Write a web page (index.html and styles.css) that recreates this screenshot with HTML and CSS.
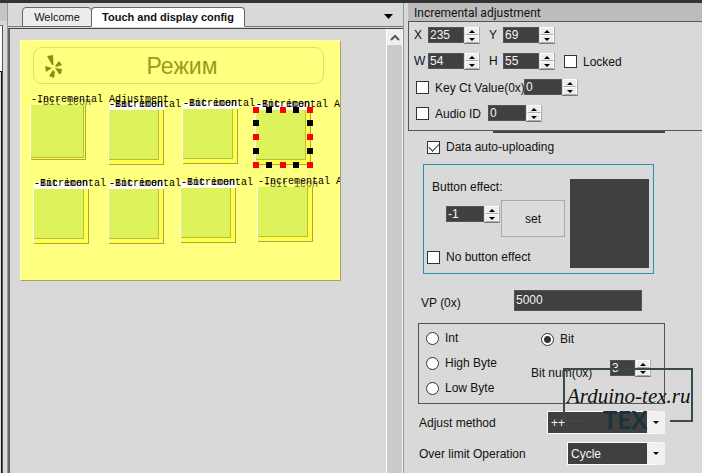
FILE: index.html
```html
<!DOCTYPE html>
<html lang="en">
<head>
<meta charset="utf-8">
<title>Touch and display config</title>
<link rel="stylesheet" href="styles.css">
</head>
<body>
<div class="window">
  <aside class="dock"><div class="dock-page"></div></aside>
  <main class="editor">
    <nav class="tabs">
      <button class="tab" type="button">Welcome</button>
      <button class="tab active" type="button">Touch and display config</button>
      <button class="tab-menu" type="button" aria-label="Open pages"><svg width="9" height="5" viewBox="0 0 9 5"><path d="M0 0h9L4.500 5z"/></svg></button>
    </nav>
    <div class="workspace">
      <div class="stage">
        <div class="screen">
          <div class="title-bar">
            <svg class="logo" width="20" height="25" viewBox="0 0 20 25"><path d="M3 2l6-1 .5 10H8zM11 12l4-5 3 4-6 2zM11 14l7 1-1 5-2 0zM9 16l2 2-1 6-5-2zM1 12l7 2-6 4z"/></svg>
            <span>Режим</span>
          </div>
          <div class="node n1"><i></i><span class="icon-name low">-Bit icon</span><span class="name">-Incremental Adjustment</span></div>
          <div class="node n2"><i></i><span class="icon-name">-Bit icon</span><span class="name short">-Incremental Adjustment</span></div>
          <div class="node n3"><i></i><span class="icon-name">-Bit icon</span><span class="name short">-Incremental Adjustment</span></div>
          <div class="node n4"><i></i><span class="icon-name">-Bit icon</span><span class="name">-Incremental Adjustment</span></div>
          <div class="node n5"><i></i><span class="icon-name">-Bit icon</span><span class="name short">-Incremental Adjustment</span></div>
          <div class="node n6"><i></i><span class="icon-name">-Bit icon</span><span class="name short">-Incremental Adjustment</span></div>
          <div class="node n7"><i></i><span class="icon-name">-Bit icon</span><span class="name short">-Incremental Adjustment</span></div>
          <div class="node n8"><i></i><span class="icon-name low">-Bit icon</span><span class="name">-Incremental Adjustment</span></div>
          <svg class="selection" width="60" height="61" viewBox="0 0 60 61">
            <path fill="#f00" d="M0 0h6v6H0zM27 0h6v6h-6zM54 0h6v6h-6zM0 27h6v6H0zM54 27h6v6h-6zM0 55h6v6H0zM27 55h6v6h-6zM54 55h6v6h-6z"/>
            <path fill="#000" d="M13 0h6v6h-6zM40 0h6v6h-6zM0 13h6v6H0zM54 13h6v6h-6zM0 41h6v6H0zM54 41h6v6h-6zM13 55h6v6h-6zM40 55h6v6h-6z"/>
          </svg>
        </div>
      </div>
      <div class="scroll"><button type="button" aria-label="Scroll up"><svg width="10" height="7" viewBox="0 0 10 7"><path d="M1 6l4-4 4 4" fill="none" stroke="#555" stroke-width="2"/></svg></button></div>
    </div>
  </main>
  <form class="inspector">
    <h2>Incremental adjustment</h2>
    <section class="geometry">
      <div class="row">
        <label class="axis" for="x">X</label>
        <span class="spin"><input id="x" type="text" value="235"><span class="steps"><button type="button" aria-label="Increase X"></button><button type="button" aria-label="Decrease X"></button></span></span>
        <label class="axis second" for="y">Y</label>
        <span class="spin"><input id="y" type="text" value="69"><span class="steps"><button type="button" aria-label="Increase Y"></button><button type="button" aria-label="Decrease Y"></button></span></span>
      </div>
      <div class="row">
        <label class="axis" for="w">W</label>
        <span class="spin"><input id="w" type="text" value="54"><span class="steps"><button type="button" aria-label="Increase W"></button><button type="button" aria-label="Decrease W"></button></span></span>
        <label class="axis second" for="h">H</label>
        <span class="spin"><input id="h" type="text" value="55"><span class="steps"><button type="button" aria-label="Increase H"></button><button type="button" aria-label="Decrease H"></button></span></span>
        <label class="check locked"><input type="checkbox">Locked</label>
      </div>
      <div class="row">
        <label class="check key"><input type="checkbox">Key Ct Value(0x)</label>
        <span class="spin wide"><input aria-label="Key Ct value" type="text" value="0"><span class="steps"><button type="button" aria-label="Increase key value"></button><button type="button" aria-label="Decrease key value"></button></span></span>
      </div>
      <div class="row">
        <label class="check audio"><input type="checkbox">Audio ID</label>
        <span class="spin wide"><input aria-label="Audio ID value" type="text" value="0"><span class="steps"><button type="button" aria-label="Increase audio ID"></button><button type="button" aria-label="Decrease audio ID"></button></span></span>
      </div>
    </section>
    <section class="fields">
      <div class="hidden-edge"></div>
      <label class="check upload"><input type="checkbox" checked>Data auto-uploading</label>
      <div class="effect">
        <div class="effect-form">
          <label class="effect-label" for="effect">Button effect:</label>
          <div class="effect-row">
            <span class="spin wide"><input id="effect" type="text" value="-1"><span class="steps"><button type="button" aria-label="Next effect"></button><button type="button" aria-label="Previous effect"></button></span></span>
            <button class="set" type="button">set</button>
          </div>
          <label class="check"><input type="checkbox">No button effect</label>
        </div>
        <div class="preview"></div>
      </div>
      <div class="vp"><label for="vp">VP (0x)</label><input id="vp" type="text" value="5000"></div>
      <div class="mode">
        <div class="mode-col">
          <label class="radio"><input type="radio" name="mode">Int</label>
          <label class="radio"><input type="radio" name="mode">High Byte</label>
          <label class="radio"><input type="radio" name="mode">Low Byte</label>
        </div>
        <div class="bit-col">
          <label class="radio bit"><input type="radio" name="mode" checked>Bit</label>
          <div class="bit-row"><label for="bit">Bit num(0x)</label>
            <span class="spin narrow"><input id="bit" type="text" value="3"><span class="steps"><button type="button" aria-label="Increase bit"></button><button type="button" aria-label="Decrease bit"></button></span></span>
          </div>
        </div>
      </div>
      <div class="choice"><label for="adjust">Adjust method</label><span class="drop"><select id="adjust"><option>++</option></select></span></div>
      <div class="choice"><label for="limit">Over limit Operation</label><span class="drop small"><select id="limit"><option>Cycle</option></select></span></div>
      <div class="watermark">
        <svg width="130" height="54" viewBox="0 0 130 54"><path d="M22 53H1V1h128v52h-22" fill="none" stroke="#3a4a4c" stroke-width="2"/></svg>
        <span class="site">Arduino-tex.ru</span>
        <span class="tex">TEX</span>
      </div>
    </section>
  </form>
</div>
</body>
</html>
```
FILE: styles.css
```css
* { box-sizing: border-box; }
body {
  margin: 0;
  background: #d9d9d9;
  color: #111;
  font: 12px/16px "Liberation Sans", Arial, sans-serif;
}
button, input, select { font: inherit; color: inherit; margin: 0; padding: 0; border-radius: 0; }
.window { display: flex; height: 100vh; border-top: 3px solid #333; overflow: hidden; }

.dock { width: 8px; flex: none; padding-top: 22px; border-right: 1px solid #999; background: linear-gradient(#c6c6c6 18px, #d9d9d9 18px); }
.dock-page { width: 3px; height: 100%; border-top: 1px solid #777; border-right: 1px solid #555; background: linear-gradient(#fff 45px, #111 45px, #111 46px, transparent 46px), linear-gradient(90deg, #ddd 1px, #111 1px); }

.editor { flex: 1; min-width: 0; display: flex; flex-direction: column; border-right: 1px solid #999; }
.tabs { display: flex; height: 24px; padding: 4px 10px 0 14px; border-bottom: 1px solid #777; }
.tab { width: 70px; height: 20px; border: 1px solid #666; border-radius: 4px 4px 0 0; background: #ececec; font-size: 11px; }
.tab.active { width: 154px; margin-left: -1px; background: #fff; border-bottom-color: #fff; font-weight: bold; white-space: nowrap; }
.tab-menu { display: flex; align-items: center; margin-left: auto; border: 0; background: none; }
.workspace { flex: 1; display: flex; margin-top: 1px; border-top: 1px solid #444; border-left: 2px solid #666; }
.stage { flex: 1; padding: 11px 0 0 10px; border-right: 1px solid #fff; }
.scroll { width: 16px; background: #cbcbcb; border-right: 1px solid #f4f4f4; }
.scroll button { display: grid; place-items: center; width: 15px; height: 16px; border: 0; background: #f0f0f0; }

.screen { position: relative; width: 321px; height: 241px; overflow: hidden; padding: 6px 16px 0 12px; background: #ffff80; border: 1px solid #a5a565; border-top-color: #ffffa8; border-left-color: #ffffc0; }
.title-bar { position: relative; height: 37px; border: 1px solid #e0df68; border-radius: 9px; color: #9b991f; font-size: 23px; line-height: 36px; text-align: center; padding-left: 7px; }
.logo { position: absolute; left: 10px; top: 6px; fill: #8e8d18; }
.node { position: absolute; width: 55px; height: 55px; border: solid #aaa838; border-width: 0 1px 1px 0; background: #ffff4c; box-shadow: -1px 0 #ffffe8; }
.node i { display: block; width: 50px; height: 50px; background: #def25b; border: solid #b8bd3e; border-width: 0 1px 1px 0; }
.name, .icon-name { position: absolute; left: 0; top: -11px; height: 11px; font: 10px/11px "Liberation Mono", monospace; white-space: nowrap; color: #000; }
.name { z-index: 1; }
.icon-name { padding-right: 2px; background: linear-gradient(transparent 4px, #fffff0 4px); }
.icon-name.low { left: 6px; top: -8px; background: none; color: #6c6c1c; }
.name.short { width: 72px; overflow: hidden; }
.n1 { left: 10px; top: 64px; }
.n2 { left: 88px; top: 69px; }
.n3 { left: 162px; top: 68px; }
.n4 { left: 235px; top: 69px; }
.n5 { left: 13px; top: 148px; }
.n6 { left: 88px; top: 148px; }
.n7 { left: 160px; top: 147px; }
.n8 { left: 237px; top: 146px; }
.n1 i { width: 53px; height: 53px; }
.selection { position: absolute; left: 232px; top: 66px; }

.inspector { flex: none; width: 298px; padding-left: 4px; display: flex; flex-direction: column; }
.inspector h2 { margin: 0; height: 18px; padding-left: 6px; background: #bcbcbc; font: 12px/20px Roboto, sans-serif; }
.geometry { display: flex; flex-direction: column; gap: 9px; padding: 5px 5px 8px; border: solid #555; border-width: 1px 0 1px 1px; }
.row { display: flex; height: 17px; }
.axis { width: 14px; }
.axis.second { margin-left: 9px; }
.check, .radio { display: flex; align-items: center; gap: 6px; white-space: nowrap; }
.check input, .radio input { appearance: none; flex: none; width: 13px; height: 13px; background: #fff; border: 1px solid #333; }
.check input { display: grid; place-items: center; }
.check input:checked::after { content: ""; width: 9px; height: 5px; border: solid #333; border-width: 0 0 1px 1px; transform: translateY(-1px) rotate(-45deg); }
.radio input { border-radius: 50%; }
.radio input:checked { background: radial-gradient(#333 3px, #fff 4px); }
.locked { margin-left: 9px; }
.key { width: 110px; padding-left: 2px; }
.audio { width: 74px; padding-left: 2px; }
.spin { display: flex; height: 17px; }
.spin input { width: 36px; height: 16px; padding: 0 1px; border: 1px solid #555; background: #404040; color: #f4f4f4; line-height: 14px; }
.spin.wide input { width: 38px; }
.spin.narrow input { width: 25px; }
.steps { display: flex; flex-direction: column; width: 16px; padding-left: 1px; border-bottom: 1px solid #777; border-right: 1px solid #aaa; }
.steps button { display: grid; place-items: center; height: 8px; border: 1px solid #fff; border-bottom-color: #aaa; background: #ededed; }
.steps button::before { content: ""; border: solid transparent; border-width: 0 3px 3px; border-bottom-color: #000; }
.steps button + button::before { border-width: 3px 3px 0; border-top-color: #000; }

.fields { position: relative; padding-left: 10px; }
.hidden-edge { height: 2px; margin: 0 37px 0 75px; background: #444; }
.upload { margin: 6px 0 0 9px; }
.effect { display: flex; justify-content: space-between; width: 231px; height: 110px; margin: 9px 0 0 5px; padding: 14px 4px 4px 3px; border: 1px solid #298fb4; }
.effect-form { display: flex; flex-direction: column; }
.effect-label { padding-left: 5px; }
.effect-row { display: flex; margin: 5px 0 12px 19px; }
.effect-row .spin { margin-top: 6px; }
.set { width: 64px; height: 37px; margin-left: 1px; border: 1px solid #aaa; background: #dcdcdc; }
.preview { width: 79px; height: 89px; background: #404040; }
.vp { display: flex; align-items: center; margin: 16px 0 0 3px; }
.vp label { width: 93px; padding-top: 5px; }
.vp input { width: 128px; height: 21px; padding: 0 1px 2px; border: 1px solid #555; background: #404040; color: #f4f4f4; }
.mode { display: flex; width: 247px; height: 81px; margin-top: 12px; padding: 6px 7px; border: 1px solid #555; }
.mode-col { width: 105px; display: flex; flex-direction: column; gap: 9px; }
.bit { margin: 1px 0 13px 10px; }
.bit-row { display: flex; }
.bit-row label { width: 79px; padding-top: 5px; }
.choice { display: flex; justify-content: space-between; align-items: center; width: 247px; margin-top: 7px; padding-left: 1px; }
.choice + .choice { margin-top: 8px; }
.drop { position: relative; display: block; width: 118px; }
.drop.small { width: 98px; }
.drop select { appearance: none; display: block; width: 100%; height: 23px; padding: 0 20px 0 3px; border: 1px solid #fff; border-right-width: 18px; border-right-color: #f0f0f0; background: #404040; color: #f4f4f4; }
.drop::after { content: ""; position: absolute; right: 6px; top: 10px; border: solid transparent; border-width: 3px 3px 0; border-top-color: #000; }
.watermark { position: absolute; left: 155px; top: 237px; width: 130px; height: 60px; color: #17343a; pointer-events: none; }
.site, .tex { position: absolute; white-space: nowrap; }
.site { left: 4px; top: 16px; font: italic 21px/24px "Liberation Serif", serif; color: #111; }
.tex { left: 40px; top: 38px; font: bold 24px/28px Lato, sans-serif; }
```
